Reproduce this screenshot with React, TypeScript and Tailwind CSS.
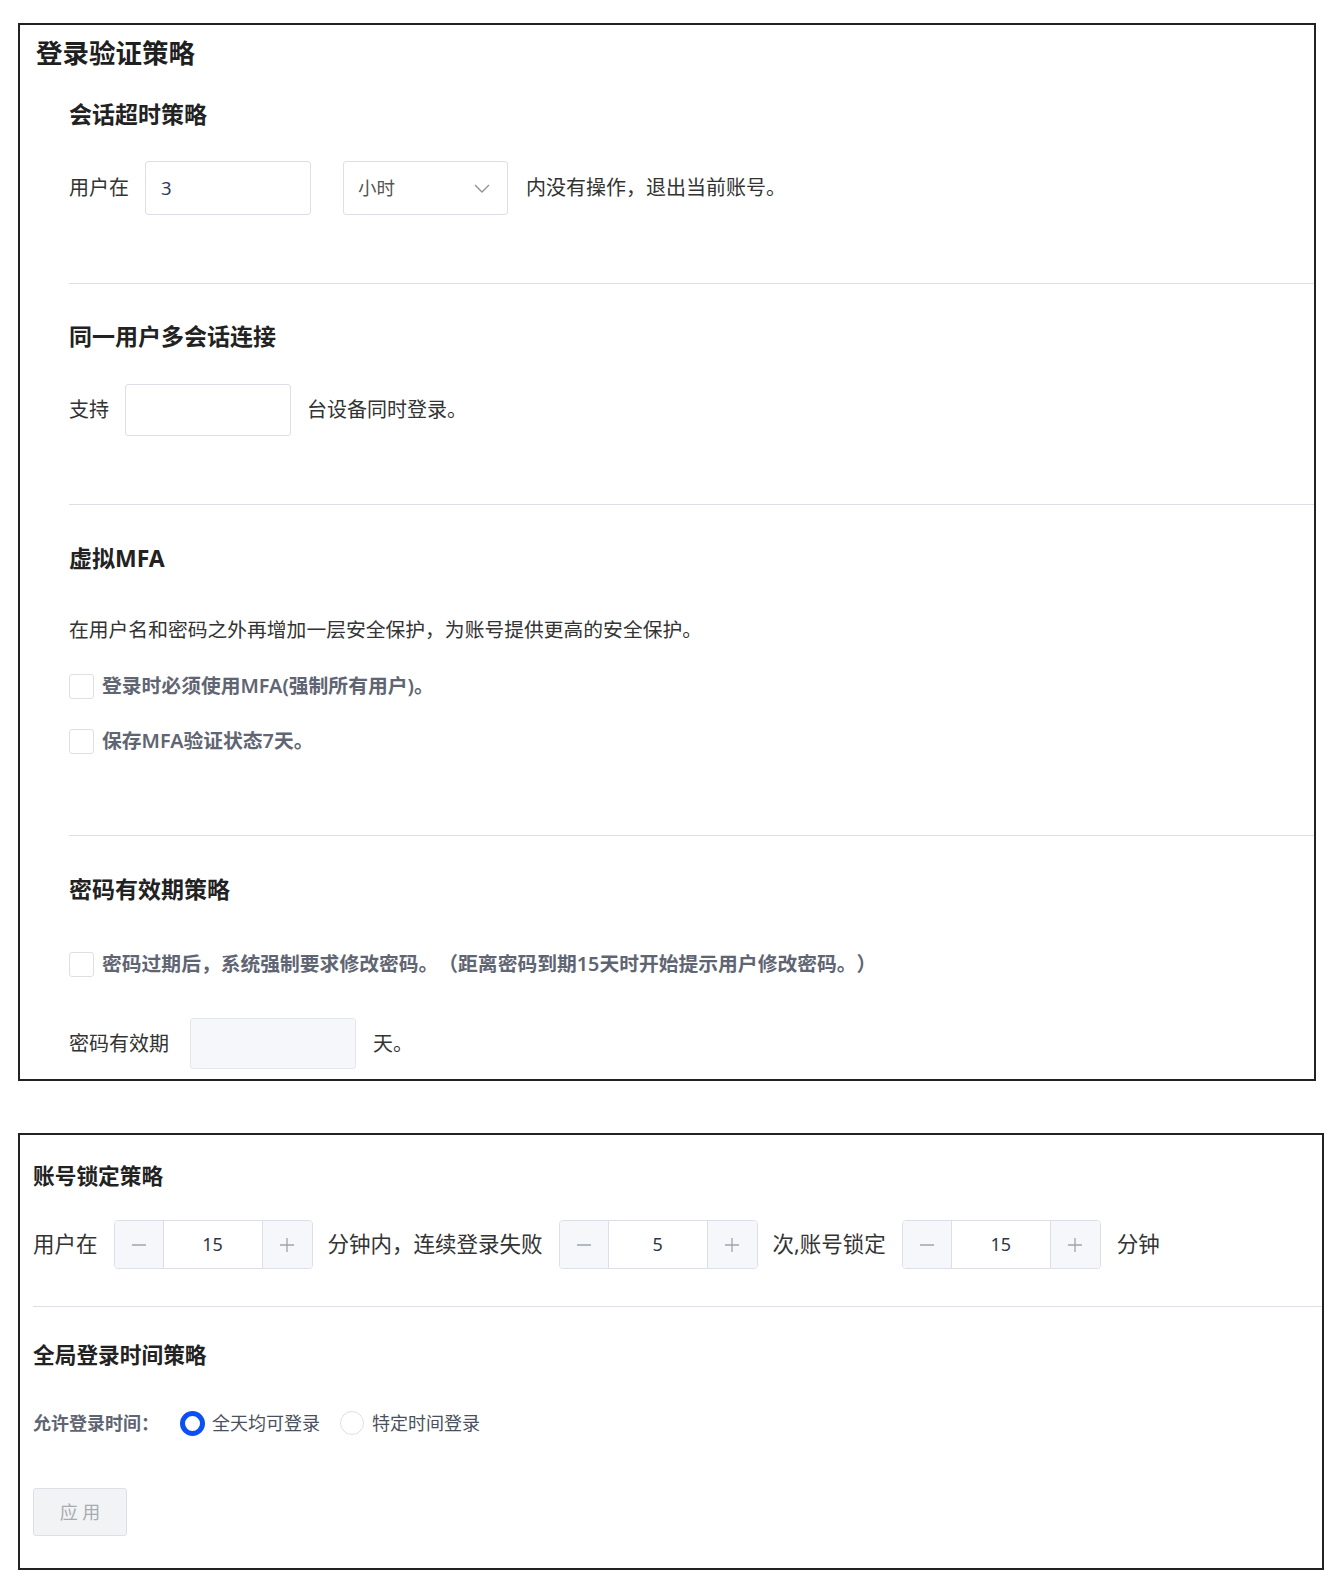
import React from "react";

const font = { fontFamily: '"Noto Sans", "Noto Sans CJK SC", sans-serif' };

function Checkbox({ label }: { label: string }) {
  return (
    <div className="flex items-center h-[28px]">
      <span className="w-[25px] h-[25px] border border-[#dcdfe6] rounded-[3px] bg-white shrink-0" />
      <span className="ml-[8px] text-[19.8px] leading-[28px] font-semibold text-[#5f6573] whitespace-nowrap">{label}</span>
    </div>
  );
}

function Minus() {
  return (
    <svg width="16" height="16" viewBox="0 0 16 16">
      <line x1="1" y1="8" x2="15" y2="8" stroke="#9ea3ab" strokeWidth="1.3" />
    </svg>
  );
}
function Plus() {
  return (
    <svg width="16" height="16" viewBox="0 0 16 16">
      <line x1="1" y1="8" x2="15" y2="8" stroke="#9ea3ab" strokeWidth="1.3" />
      <line x1="8" y1="1" x2="8" y2="15" stroke="#9ea3ab" strokeWidth="1.3" />
    </svg>
  );
}

function NumberInput({ value }: { value: string }) {
  return (
    <div className="flex h-[49px] w-[199px] border border-[#dcdfe6] rounded-[4px] overflow-hidden shrink-0">
      <div className="w-[49px] bg-[#f5f7fa] border-r border-[#dcdfe6] flex items-center justify-center">
        <Minus />
      </div>
      <div className="flex-1 bg-white flex items-center justify-center text-[18px] text-[#2f3545]">{value}</div>
      <div className="w-[50px] bg-[#f5f7fa] border-l border-[#dcdfe6] flex items-center justify-center">
        <Plus />
      </div>
    </div>
  );
}

function Chevron() {
  return (
    <svg width="20" height="20" viewBox="0 0 20 20" fill="none">
      <path d="M3 7 L10 14 L17 7" stroke="#8d9199" strokeWidth="1.4" />
    </svg>
  );
}

export default function App() {
  return (
    <div
      className="bg-white w-full h-[1582px] overflow-hidden pt-[23px] pl-[18px] text-[#333] [text-spacing-trim:space-all]"
      style={font}
    >
      {/* Panel 1 */}
      <div className="w-[1298px] h-[1058px] border-2 border-[#222] overflow-hidden">
        <div className="pl-[16px] pt-[10px]">
          <h1 className="h-[36px] leading-[36px] text-[26.5px] font-bold text-[#1f1f1f]">登录验证策略</h1>
        </div>
        <div className="ml-[49px]">
          {/* Section 1 */}
          <h2 className="mt-[27px] h-[32px] leading-[32px] text-[23px] font-bold text-[#222]">会话超时策略</h2>
          <div className="mt-[31px] flex items-center h-[54px] text-[20px]">
            <span className="text-[#333]">用户在</span>
            <div className="ml-[16px] w-[166px] h-[54px] border border-[#dcdfe6] rounded-[3px] flex items-center pl-[15px] text-[18.5px] text-[#2f3a55]">3</div>
            <div className="ml-[32px] w-[165px] h-[54px] border border-[#dcdfe6] rounded-[3px] flex items-center justify-between pl-[14px] pr-[15px] text-[18.5px] text-[#555]">
              <span>小时</span>
              <Chevron />
            </div>
            <span className="ml-[18px] text-[#333]">内没有操作，退出当前账号。</span>
          </div>
          <div className="mt-[68px] h-px bg-[#dcdfe6]" />

          {/* Section 2 */}
          <h2 className="mt-[36px] h-[32px] leading-[32px] text-[23px] font-bold text-[#222]">同一用户多会话连接</h2>
          <div className="mt-[32px] flex items-center h-[52px] text-[20px]">
            <span>支持</span>
            <div className="ml-[16px] w-[166px] h-[52px] border border-[#dcdfe6] rounded-[3px]" />
            <span className="ml-[16px]">台设备同时登录。</span>
          </div>
          <div className="mt-[68px] h-px bg-[#dcdfe6]" />

          {/* Section 3 */}
          <h2 className="mt-[37px] h-[32px] leading-[32px] text-[23px] font-bold text-[#222]">虚拟MFA</h2>
          <p className="mt-[42px] h-[28px] leading-[28px] text-[19.8px]">在用户名和密码之外再增加一层安全保护，为账号提供更高的安全保护。</p>
          <div className="mt-[28px]">
            <Checkbox label="登录时必须使用MFA(强制所有用户)。" />
          </div>
          <div className="mt-[27px]">
            <Checkbox label="保存MFA验证状态7天。" />
          </div>
          <div className="mt-[80px] h-px bg-[#dcdfe6]" />

          {/* Section 4 */}
          <h2 className="mt-[37px] h-[32px] leading-[32px] text-[23px] font-bold text-[#222]">密码有效期策略</h2>
          <div className="mt-[45px]">
            <Checkbox label="密码过期后，系统强制要求修改密码。（距离密码到期15天时开始提示用户修改密码。）" />
          </div>
          <div className="mt-[40px] flex items-center h-[51px] text-[20px]">
            <span>密码有效期</span>
            <div className="ml-[21px] w-[166px] h-[51px] border border-[#e4e7ed] bg-[#f5f7fa] rounded-[3px]" />
            <span className="ml-[17px]">天。</span>
          </div>
        </div>
      </div>

      {/* Panel 2 */}
      <div className="mt-[52px] w-[1306px] h-[437px] border-2 border-[#222] overflow-hidden pl-[13px]">
        <h2 className="mt-[26px] h-[30px] leading-[30px] text-[21.7px] font-bold text-[#222]">账号锁定策略</h2>
        <div className="mt-[29px] flex items-center h-[49px] text-[21.5px] text-[#333] whitespace-nowrap">
          <span>用户在</span>
          <div className="ml-[16px]"><NumberInput value="15" /></div>
          <span className="ml-[15px]">分钟内，连续登录失败</span>
          <div className="ml-[16px]"><NumberInput value="5" /></div>
          <span className="ml-[15px]">次,账号锁定</span>
          <div className="ml-[16px]"><NumberInput value="15" /></div>
          <span className="ml-[16px]">分钟</span>
        </div>
        <div className="mt-[37px] h-px bg-[#dcdfe6]" />
        <h2 className="mt-[33px] h-[30px] leading-[30px] text-[21.7px] font-bold text-[#222]">全局登录时间策略</h2>
        <div className="mt-[39px] flex items-center h-[28px]">
          <span className="text-[18px] font-bold text-[#5f6573]">允许登录时间：</span>
          <span className="ml-[21px] w-[25px] h-[25px] rounded-full border-[5px] border-[#0b50f2] bg-white shrink-0" />
          <span className="ml-[7px] text-[18px] text-[#4a505c]">全天均可登录</span>
          <span className="ml-[20px] w-[24px] h-[24px] rounded-full border border-[#dcdfe6] bg-white shrink-0" />
          <span className="ml-[8px] text-[18px] text-[#4a505c]">特定时间登录</span>
        </div>
        <button className="mt-[51px] w-[94px] h-[48px] bg-[#f2f3f5] border border-[#dcdfe6] rounded-[3px] text-[18px] text-[#a8abb2] flex items-center justify-center">
          应 用
        </button>
      </div>
    </div>
  );
}
